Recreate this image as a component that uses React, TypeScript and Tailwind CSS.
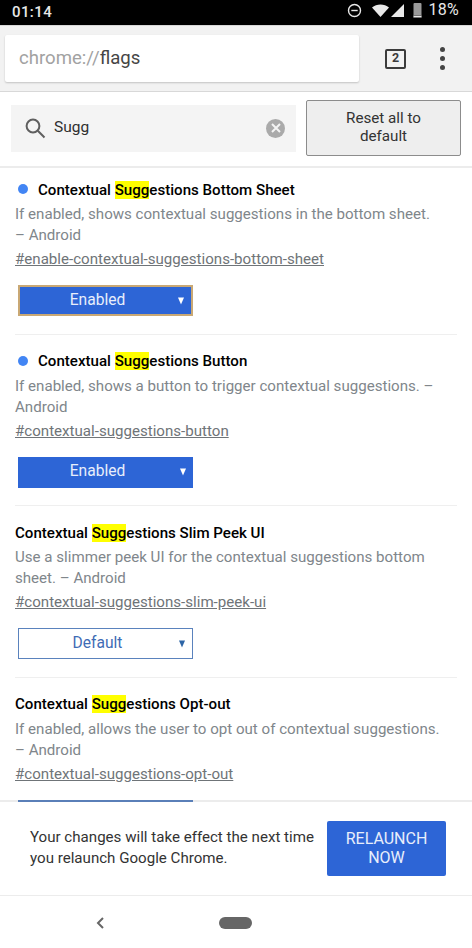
import React from "react";

function Flag({ dot, pre = "Contextual ", rest, desc, link, sel, focus }: { dot?: boolean; pre?: string; rest: string; desc: React.ReactNode; link: string; sel: "Enabled" | "Default" | null; focus?: boolean }) {
  return (
    <div className="mx-[15px] h-[171.5px] pt-[13px] border-b border-[#efefef] shrink-0 last:border-b-0">
      <div className="flex items-center h-[20px] mt-[4px]">
        {dot && <span className="w-[10px] h-[10px] rounded-full bg-[#4285f4] ml-[3px] mr-[10px] mb-[2px]" />}
        <span className="text-[15.1px] font-medium text-black whitespace-nowrap">
          {pre}
          <span className="bg-[#ffff00]">Sugg</span>
          {rest}
        </span>
      </div>
      <div className="text-[15.1px] leading-[21px] text-[#80868b] mt-[4px]">{desc}</div>
      <div className="text-[15.1px] leading-[21px] text-[#6f7478] underline mt-[3px] whitespace-nowrap">{link}</div>
      {sel && (
        <div
          className={
            "mt-[15px] ml-[3px] w-[175px] h-[31px] relative flex items-center justify-center text-[15.6px] " +
            (sel === "Enabled"
              ? "bg-[#2d65d6] text-[#e8eefb] " + (focus ? "border-2 border-[#c9a874]" : "")
              : "bg-white text-[#3f6cb5] border border-[#5a82bd]")
          }
        >
          <span className="mr-[16px]">{sel}</span>
          <span className={"absolute right-[7px] top-1/2 -translate-y-1/2 w-0 h-0 border-l-[3.5px] border-r-[3.5px] border-t-[7px] border-l-transparent border-r-transparent " + (sel === "Enabled" ? "border-t-white" : "border-t-[#2d65a6]")} />
        </div>
      )}
    </div>
  );
}

export default function App() {
  return (
    <div className="w-[472px] h-[948px] bg-white flex flex-col overflow-hidden font-['Roboto','Liberation_Sans',sans-serif]">
      <div className="h-[25px] bg-black text-[#e8e8e8] flex items-center justify-between pl-[12px] shrink-0 relative">
        <span className="text-[15px] font-medium tracking-[0.4px]">01:14</span>
        <div className="flex items-center absolute right-[13px] top-0 h-[20px]">
          <svg width="15" height="15" viewBox="0 0 16 16" className="mr-[10px]" fill="none" stroke="#e8e8e8" strokeWidth="1.5">
            <circle cx="8" cy="8" r="6.4" />
            <path d="M4.6 8h6.8" />
          </svg>
          <svg width="17" height="13" viewBox="0 0 17 13" fill="#e8e8e8"><path d="M0 3.5C4.6-.6 12.4-.6 17 3.5L8.5 13z" /></svg>
          <svg width="13" height="13" viewBox="0 0 13 13" fill="#e8e8e8" className="ml-[2px]"><path d="M13 0v13H0z" /></svg>
          <svg width="9" height="16" viewBox="0 0 9 16" className="ml-[9px] mr-[6px]"><rect x="0.5" y="1" width="8" height="15" fill="#9a9a9a" rx="1" /><rect x="0.5" y="13" width="8" height="3" fill="#000" /><rect x="0.5" y="13.5" width="8" height="2" fill="#e8e8e8" /></svg>
          <span className="text-[16px] tracking-[0.3px]">18%</span>
        </div>
      </div>

      <div className="h-[67px] bg-[#f2f2f2] border-t border-[#d8d8d8] border-b flex items-center pl-[5px] shrink-0">
        <div className="w-[354px] h-[47px] bg-white rounded-[2px] shadow-[0_1px_2px_rgba(0,0,0,0.2)] flex items-center pl-[14px] pt-[1px] text-[18.6px] text-[#a2a2a2]">
          chrome://<span className="text-[#454545]">flags</span>
        </div>
        <div className="ml-[26px] w-[21px] h-[20px] border-2 border-[#3c3c3c] rounded-[2px] flex items-center justify-center text-[12.5px] font-bold text-[#3c3c3c]">2</div>
        <div className="ml-[34px] flex flex-col gap-[4px]">
          <span className="w-[5px] h-[5px] rounded-full bg-[#444]" />
          <span className="w-[5px] h-[5px] rounded-full bg-[#444]" />
          <span className="w-[5px] h-[5px] rounded-full bg-[#444]" />
        </div>
      </div>

      <div className="h-[76px] border-b-2 border-[#ececec] flex items-center pl-[11px] pb-[2px] shrink-0">
        <div className="w-[285px] h-[47px] bg-[#f4f4f4] flex items-center relative">
          <svg width="24" height="24" viewBox="0 0 24 24" fill="none" stroke="#5f5f5f" strokeWidth="2" className="ml-[12px]">
            <circle cx="10" cy="10" r="6.4" />
            <path d="M14.8 14.8 21.5 21.5" />
          </svg>
          <span className="ml-[7px] text-[15.5px] text-[#303030]">Sugg</span>
          <span className="absolute right-[11px] top-[14px] w-[19px] h-[19px] rounded-full bg-[#aaaaaa] flex items-center justify-center">
            <svg width="10" height="10" viewBox="0 0 10 10" stroke="#f4f4f4" strokeWidth="2"><path d="M1 1l8 8M9 1l-8 8" /></svg>
          </span>
        </div>
        <div className="ml-[10px] w-[155px] h-[56px] pb-[2px] bg-[#eeeeee] border border-[#8c8c8c] rounded-[2px] flex items-center justify-center text-center text-[15.2px] leading-[18px] text-[#333]">
          Reset all to<br />default
        </div>
      </div>

      <div className="flex-1 overflow-hidden min-h-0">
        <div className="flex flex-col -mt-[5px]">
          <Flag dot rest="estions Bottom Sheet" desc={<>If enabled, shows contextual suggestions in the bottom sheet.<br />– Android</>} link="#enable-contextual-suggestions-bottom-sheet" sel="Enabled" focus />
          <Flag dot rest="estions Button" desc={<>If enabled, shows a button to trigger contextual suggestions. –<br />Android</>} link="#contextual-suggestions-button" sel="Enabled" />
          <Flag rest="estions Slim Peek UI" desc={<>Use a slimmer peek UI for the contextual suggestions bottom<br />sheet. – Android</>} link="#contextual-suggestions-slim-peek-ui" sel="Default" />
          <Flag rest="estions Opt-out" desc={<>If enabled, allows the user to opt out of contextual suggestions.<br />– Android</>} link="#contextual-suggestions-opt-out" sel={null} />
        </div>
      </div>

      <div className="h-[96px] border-t-2 border-[#ececec] border-b flex items-center pl-[30px] pb-[2px] shrink-0 relative bg-white">
        <span className="absolute left-[18px] top-[-2px] w-[175px] h-[2px] bg-[#5a7fb8]" />
        <div className="text-[15.1px] leading-[21px] text-[#333] whitespace-nowrap">Your changes will take effect the next time<br />you relaunch Google Chrome.</div>
        <div className="absolute left-[327px] top-[19px] w-[119px] h-[55px] bg-[#2d65d6] rounded-[2px] flex items-center justify-center text-center text-[16px] leading-[18.5px] text-[#e8eefb]">RELAUNCH<br />NOW</div>
      </div>

      <div className="h-[52px] flex items-center pt-[2px] shrink-0 bg-white relative">
        <svg width="10" height="14" viewBox="0 0 10 14" fill="none" stroke="#666" strokeWidth="2" className="ml-[95px]"><path d="M8 2 3 7l5 5" /></svg>
        <span className="ml-[114px] w-[33px] h-[12px] rounded-full bg-[#666]" />
      </div>
    </div>
  );
}
